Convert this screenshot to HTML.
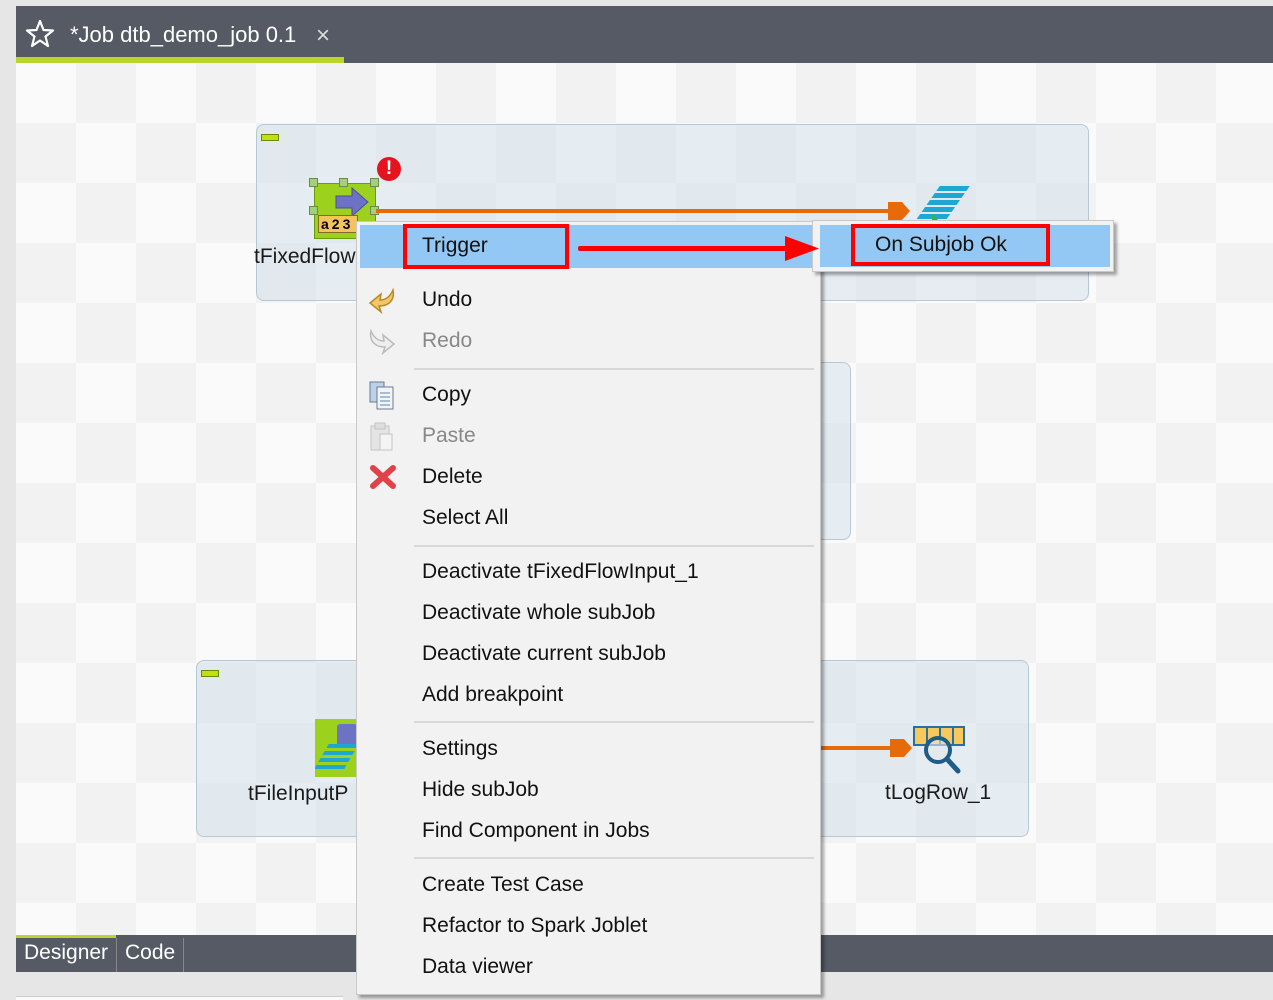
<!DOCTYPE html>
<html><head><meta charset="utf-8"><style>
*{margin:0;padding:0;box-sizing:border-box}
body{width:1273px;height:1000px;background:#e6e6e6;position:relative;overflow:hidden;font-family:"Liberation Sans",sans-serif}
.abs{position:absolute}
#canvas{left:16px;top:63px;width:1257px;height:872px;
background-color:#fafafa;
background-image:linear-gradient(45deg,#f2f2f2 25%,transparent 25%,transparent 75%,#f2f2f2 75%),linear-gradient(45deg,#f2f2f2 25%,transparent 25%,transparent 75%,#f2f2f2 75%);
background-size:120px 120px;background-position:0 0,60px 60px}
.sub{position:absolute;background:rgba(205,222,234,0.45);border:1.5px solid #b6c8d6;border-radius:8px}
.mini{position:absolute;width:18px;height:7px;background:#c0e010;border:1px solid #6b8a00}
.lbl{position:absolute;font-size:21px;color:#1a1a1a}
.menu{left:356px;top:221px;width:465px;height:774px;background:#f2f2f2;border:1px solid #c8c8c8;box-shadow:3px 3px 3px rgba(0,0,0,.35)}
.it{position:absolute;left:65px;font-size:21px;color:#111;line-height:24px}
.dis{color:#888}
.sep{position:absolute;left:57px;width:400px;height:2px;background:#d8d8d8}
</style></head><body>
<div class="abs" style="left:16px;top:6px;width:1257px;height:57px;background:#555a65"></div>
<div class="abs" style="left:16px;top:57px;width:328px;height:6px;background:#b9d42a"></div>
<svg class="abs" style="left:24px;top:18px" width="32" height="32" viewBox="0 0 32 32"><path d="M16 3 L19.5 12 L29 12.5 L21.5 18.5 L24 28 L16 22.5 L8 28 L10.5 18.5 L3 12.5 L12.5 12 Z" fill="none" stroke="#fff" stroke-width="2.2" stroke-linejoin="round"/></svg>
<div class="abs" style="left:70px;top:22px;font-size:22px;color:#fff">*Job dtb_demo_job 0.1</div>
<div class="abs" style="left:316px;top:22px;font-size:24px;color:#ddd;font-weight:300">×</div>

<div id="canvas" class="abs"></div>

<div class="sub" style="left:256px;top:124px;width:833px;height:177px"></div>
<div class="mini" style="left:261px;top:134px"></div>
<div class="sub" style="left:357px;top:362px;width:494px;height:178px"></div>
<div class="sub" style="left:196px;top:660px;width:833px;height:177px"></div>
<div class="mini" style="left:201px;top:670px"></div>

<div class="abs" style="left:314px;top:183px;width:62px;height:56px;background:#9cd21e;border:1px solid #6c9a10"></div>
<svg class="abs" style="left:334px;top:186px" width="42" height="34"><path d="M2 10 H18 V2 L34 16 L18 30 V22 H2 Z" fill="#6d72c4" stroke="#4a4f9a"/></svg>
<div class="abs" style="left:318px;top:215px;width:40px;height:18px;background:#f2c45a;border:1px solid #8a6a20;font-size:14px;font-weight:bold;line-height:16px;letter-spacing:3px;padding-left:2px">a23</div>
<div class="abs" style="left:309px;top:178px;width:9px;height:9px;background:#a4d07a;border:1px solid #6a8a50"></div>
<div class="abs" style="left:339px;top:178px;width:9px;height:9px;background:#a4d07a;border:1px solid #6a8a50"></div>
<div class="abs" style="left:370px;top:178px;width:9px;height:9px;background:#a4d07a;border:1px solid #6a8a50"></div>
<div class="abs" style="left:309px;top:206px;width:9px;height:9px;background:#a4d07a;border:1px solid #6a8a50"></div>
<div class="abs" style="left:370px;top:206px;width:9px;height:9px;background:#a4d07a;border:1px solid #6a8a50"></div>
<div class="abs" style="left:377px;top:157px;width:24px;height:24px;border-radius:50%;background:#e4141e;color:#fff;font-weight:bold;font-size:19px;text-align:center;line-height:24px">!</div>
<div class="lbl" style="left:254px;top:245px">tFixedFlow</div>
<div class="abs" style="left:376px;top:209px;width:520px;height:4px;background:#e46a0a"></div>
<svg class="abs" style="left:888px;top:200px" width="26" height="22"><path d="M0 2 H14 L22 11 L14 20 H0 Z" fill="#e46a0a"/></svg>
<svg class="abs" style="left:912px;top:180px" width="60" height="48"><g fill="#1ea7d0" transform="skewX(-35) translate(28 0)"><rect x="4" y="6" width="30" height="5"/><rect x="4" y="13" width="30" height="5"/><rect x="4" y="20" width="30" height="5"/><rect x="4" y="27" width="30" height="5"/><rect x="4" y="34" width="30" height="5"/></g><path d="M2 40 H20 V34 L28 42 L20 48 Z" fill="#2fb834"/></svg>

<div class="abs" style="left:315px;top:719px;width:42px;height:58px;background:#9cd21e"></div>
<div class="abs" style="left:337px;top:724px;width:20px;height:22px;background:#6d72c4;border-radius:3px"></div>
<svg class="abs" style="left:315px;top:740px" width="42" height="36"><g fill="#1ea7d0" transform="skewX(-30) translate(12 0)"><rect x="4" y="4" width="30" height="4"/><rect x="4" y="11" width="30" height="4"/><rect x="4" y="18" width="30" height="4"/><rect x="4" y="25" width="30" height="4"/></g></svg>
<div class="lbl" style="left:248px;top:782px">tFileInputP</div>

<div class="abs" style="left:820px;top:746px;width:80px;height:4px;background:#e46a0a"></div>
<svg class="abs" style="left:890px;top:737px" width="26" height="22"><path d="M0 2 H14 L22 11 L14 20 H0 Z" fill="#e46a0a"/></svg>
<div class="abs" style="left:913px;top:726px;width:52px;height:20px;background:#f8c95a;border:2px solid #2b6ea0;background-image:repeating-linear-gradient(90deg,transparent 0 11px,#2b6ea0 11px 13px)"></div>
<svg class="abs" style="left:918px;top:732px" width="52" height="46"><circle cx="20" cy="18" r="12" fill="rgba(230,230,230,.6)" stroke="#1f5c88" stroke-width="4"/><line x1="29" y1="27" x2="40" y2="39" stroke="#1f5c88" stroke-width="5" stroke-linecap="round"/></svg>
<div class="lbl" style="left:885px;top:781px">tLogRow_1</div>

<div class="abs" style="left:16px;top:935px;width:1257px;height:37px;background:#555a65"></div>
<div class="abs" style="left:16px;top:935px;width:100px;height:3px;background:#b9d42a"></div>
<div class="abs" style="left:116px;top:938px;width:1px;height:34px;background:#888"></div>
<div class="abs" style="left:183px;top:938px;width:1px;height:34px;background:#888"></div>
<div class="abs" style="left:24px;top:941px;font-size:21px;color:#fff">Designer</div>
<div class="abs" style="left:125px;top:941px;font-size:21px;color:#fff">Code</div>
<div class="abs" style="left:16px;top:996px;width:327px;height:4px;background:#fafafa;border-top:1px solid #ccc"></div>

<div class="abs menu">
 <div class="abs" style="left:3px;top:3px;width:456px;height:43px;background:#94c8f4"></div>
 <div class="it" style="top:12px">Trigger</div>
 <div class="abs" style="left:432px;top:14px;font-size:16px;color:#333">›</div>
 <svg class="abs" style="left:10px;top:64px" width="32" height="28"><path d="M26 4 C28 14 22 20 12 20 L14 26 L3 17 L14 8 L13 14 C19 14 23 11 26 4 Z" fill="#f4c66a" stroke="#b88a20" stroke-width="1.5"/></svg>
 <div class="it" style="top:66px">Undo</div>
 <svg class="abs" style="left:10px;top:105px" width="32" height="28"><path d="M4 4 C2 14 8 20 18 20 L16 26 L27 17 L16 8 L17 14 C11 14 7 11 4 4 Z" fill="#eee" stroke="#bbb" stroke-width="1.5"/></svg>
 <div class="it dis" style="top:107px">Redo</div>
 <div class="sep" style="top:146px"></div>
 <svg class="abs" style="left:12px;top:159px" width="28" height="30"><rect x="1" y="1" width="14" height="20" fill="#bcd0e8" stroke="#6a7a94"/><rect x="8" y="6" width="16" height="22" fill="#f4f4f4" stroke="#6a7a94"/><g stroke="#5a84c0"><line x1="11" y1="12" x2="21" y2="12"/><line x1="11" y1="16" x2="21" y2="16"/><line x1="11" y1="20" x2="21" y2="20"/><line x1="11" y1="24" x2="21" y2="24"/></g></svg>
 <div class="it" style="top:161px">Copy</div>
 <svg class="abs" style="left:12px;top:200px" width="28" height="30"><rect x="2" y="4" width="18" height="24" fill="#e4e4e4" stroke="#c4c4c4"/><rect x="6" y="1" width="10" height="6" fill="#ddd" stroke="#c4c4c4"/><rect x="11" y="12" width="12" height="16" fill="#f4f4f4" stroke="#c4c4c4"/></svg>
 <div class="it dis" style="top:202px">Paste</div>
 <svg class="abs" style="left:12px;top:242px" width="28" height="26"><path d="M4 4 L24 22 M24 4 L4 22" stroke="#e0424a" stroke-width="6" stroke-linecap="round"/></svg>
 <div class="it" style="top:243px">Delete</div>
 <div class="it" style="top:284px">Select All</div>
 <div class="sep" style="top:323px"></div>
 <div class="it" style="top:338px">Deactivate tFixedFlowInput_1</div>
 <div class="it" style="top:379px">Deactivate whole subJob</div>
 <div class="it" style="top:420px">Deactivate current subJob</div>
 <div class="it" style="top:461px">Add breakpoint</div>
 <div class="sep" style="top:499px"></div>
 <div class="it" style="top:515px">Settings</div>
 <div class="it" style="top:556px">Hide subJob</div>
 <div class="it" style="top:597px">Find Component in Jobs</div>
 <div class="sep" style="top:635px"></div>
 <div class="it" style="top:651px">Create Test Case</div>
 <div class="it" style="top:692px">Refactor to Spark Joblet</div>
 <div class="it" style="top:733px">Data viewer</div>
</div>

<div class="abs" style="left:812px;top:220px;width:302px;height:52px;background:#f2f2f2;border:1px solid #c8c8c8;box-shadow:3px 3px 3px rgba(0,0,0,.35)"></div>
<div class="abs" style="left:820px;top:225px;width:290px;height:42px;background:#94c8f4"></div>
<div class="abs" style="left:875px;top:233px;font-size:21px;color:#111">On Subjob Ok</div>

<div class="abs" style="left:403px;top:224px;width:166px;height:45px;border:4px solid #f00"></div>
<div class="abs" style="left:851px;top:224px;width:199px;height:42px;border:4px solid #f00"></div>
<div class="abs" style="left:578px;top:246px;width:210px;height:5px;background:#f00;border-radius:2px"></div>
<svg class="abs" style="left:785px;top:236px" width="34" height="25"><path d="M0 0 L34 12.5 L0 25 Z" fill="#f00"/></svg>
</body></html>
